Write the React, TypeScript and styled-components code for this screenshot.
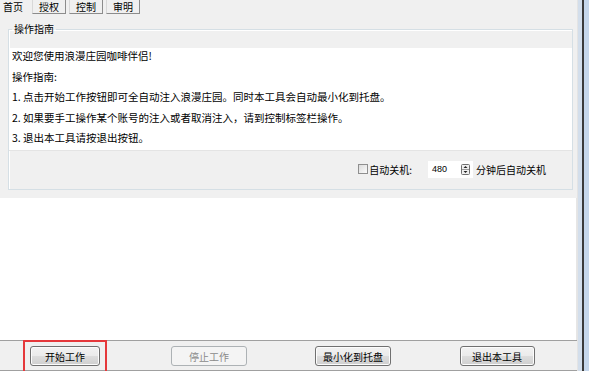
import React from 'react';
import styled, { createGlobalStyle } from 'styled-components';

const GlobalStyle = createGlobalStyle`
  html, body {
    margin: 0;
    padding: 0;
    background: #f0f0f0;
  }
  body {
    font-family: "Noto Sans CJK SC", "Liberation Sans", sans-serif;
    font-size: 10px;
    color: #000;
  }
`;

const Window = styled.div`
  width: 589px;
  height: 371px;
  display: flex;
  overflow: hidden;
`;

const Main = styled.div`
  width: 577px;
  display: flex;
  flex-direction: column;
  background: #f0f0f0;
`;

const Frame = styled.div`
  width: 12px;
  display: flex;
  border-left: 1px solid #e4e4e4;
  box-sizing: border-box;
`;

const FrameStrip = styled.div<{ $w: number; $c: string }>`
  width: ${p => p.$w}px;
  background: ${p => p.$c};
`;

const TabBar = styled.div`
  height: 14px;
  display: flex;
  align-items: flex-end;
  padding-left: 3px;
`;

const Tab = styled.div<{ $active?: boolean }>`
  height: 14px;
  line-height: 13px;
  padding: 0 ${p => (p.$active ? '0' : '6px')};
  margin-right: ${p => (p.$active ? '9px' : '3px')};
  box-sizing: border-box;
  border: ${p => (p.$active ? 'none' : '1px solid #8c8c8c')};
  border-top: none;
  border-left-color: #d8d8d8;
  white-space: nowrap;
`;

const Panel = styled.div`
  padding: 10px 4px 8px 8px;
`;

const GroupBox = styled.fieldset`
  margin: 0;
  padding: 0;
  width: 565px;
  height: 166px;
  box-sizing: border-box;
  border: 1px solid #d5dfe5;
  box-shadow: inset 1px 1px 0 #fff;
  display: flex;
  flex-direction: column;
  min-width: 0;
`;

const Legend = styled.legend`
  margin-left: 3px;
  padding: 0 2px;
  line-height: 10px;
  height: 10px;
`;

const TopGap = styled.div`
  height: 14px;
`;

const TextArea = styled.div`
  height: 103px;
  background: #fff;
  border-bottom: 1px solid #e4e4e4;
  padding: 0 3px;
  box-sizing: border-box;
  overflow: hidden;
  font-size: 10.5px;
`;

const Lines = styled.div`
  margin-top: -2px;
`;

const Line = styled.div`
  height: 20.5px;
  line-height: 20.5px;
  white-space: nowrap;
`;

const OptionRow = styled.div`
  flex: 1;
  display: flex;
  align-items: center;
  justify-content: flex-end;
  padding: 0 26px 2px 0;
`;

const CheckBox = styled.span`
  width: 8px;
  height: 8px;
  border: 1px solid #8f8f8f;
  background: linear-gradient(135deg, #dcdcdc, #fbfbfb);
  margin-right: 1px;
`;

const OptionLabel = styled.span`
  margin-right: 16px;
`;

const NumberBox = styled.div`
  width: 45px;
  height: 17px;
  background: #fff;
  display: flex;
  align-items: center;
  justify-content: space-between;
  padding: 0 3px 0 4px;
  box-sizing: border-box;
  margin-right: 3px;
  font-size: 9px;
  font-family: "Liberation Sans", sans-serif;
`;

const Blank = styled.div`
  flex: 1;
  background: #fff;
  border-right: 1px solid #e6e6e6;
`;

const Footer = styled.div`
  height: 31px;
  border-top: 1px solid #a0a0a0;
  border-bottom: 1px solid #a0a0a0;
  box-sizing: border-box;
  display: grid;
  grid-template-columns: repeat(4, 144px);
  margin-left: -7px;
  align-items: center;
  justify-items: center;
`;

const ButtonSlot = styled.div`
  position: relative;
  display: flex;
  padding-top: 1px;
`;

const Highlight = styled.div`
  position: absolute;
  left: -7px;
  right: -7px;
  top: -5px;
  height: 40px;
  border: 2px solid #e5383b;
  pointer-events: none;
`;

const Button = styled.button<{ $w: number }>`
  width: ${p => p.$w}px;
  height: 20px;
  padding: 0;
  font-family: inherit;
  font-size: 10px;
  color: #000;
  border: 1px solid #707070;
  border-radius: 3px;
  background: linear-gradient(#f2f2f2 0%, #ebebeb 50%, #dddddd 51%, #cfcfcf 100%);
  box-shadow: inset 0 0 0 1px #fcfcfc;

  &:disabled {
    color: #8a8a8a;
    border-color: #adb2b5;
    background: #f4f4f4;
    box-shadow: none;
  }
`;

const Spinner = () => (
  <svg width="9" height="11" viewBox="0 0 9 11">
    <rect x="0.5" y="0.5" width="8" height="10" rx="1" fill="#f0f0f0" stroke="#707070" />
    <line x1="1" y1="5.5" x2="8" y2="5.5" stroke="#9a9a9a" />
    <path d="M2.5 4 L4.5 2 L6.5 4 Z" fill="#222" />
    <path d="M2.5 7 L4.5 9 L6.5 7 Z" fill="#222" />
  </svg>
);

const tabs = ['授权', '控制', '审明'];

const lines = [
  '欢迎您使用浪漫庄园咖啡伴侣!',
  '操作指南:',
  '1. 点击开始工作按钮即可全自动注入浪漫庄园。同时本工具会自动最小化到托盘。',
  '2. 如果要手工操作某个账号的注入或者取消注入，请到控制标签栏操作。',
  '3. 退出本工具请按退出按钮。',
];

export default function App() {
  return (
    <>
      <GlobalStyle />
      <Window>
        <Main>
          <TabBar>
            <Tab $active>首页</Tab>
            {tabs.map(t => (
              <Tab key={t}>{t}</Tab>
            ))}
          </TabBar>
          <Panel>
            <GroupBox>
              <Legend>操作指南</Legend>
              <TopGap />
              <TextArea>
                <Lines>
                  {lines.map(l => (
                    <Line key={l}>{l}</Line>
                  ))}
                </Lines>
              </TextArea>
              <OptionRow>
                <CheckBox />
                <OptionLabel>自动关机:</OptionLabel>
                <NumberBox>
                  480
                  <Spinner />
                </NumberBox>
                分钟后自动关机
              </OptionRow>
            </GroupBox>
          </Panel>
          <Blank />
          <Footer>
            <ButtonSlot>
              <Highlight />
              <Button $w={70}>开始工作</Button>
            </ButtonSlot>
            <ButtonSlot>
              <Button $w={76} disabled>停止工作</Button>
            </ButtonSlot>
            <ButtonSlot>
              <Button $w={76}>最小化到托盘</Button>
            </ButtonSlot>
            <ButtonSlot>
              <Button $w={75}>退出本工具</Button>
            </ButtonSlot>
          </Footer>
        </Main>
        <Frame>
          <FrameStrip $w={4} $c="#d3deeb" />
          <FrameStrip $w={2} $c="#3b3b3b" />
          <FrameStrip $w={5} $c="#c6d7eb" />
        </Frame>
      </Window>
    </>
  );
}
